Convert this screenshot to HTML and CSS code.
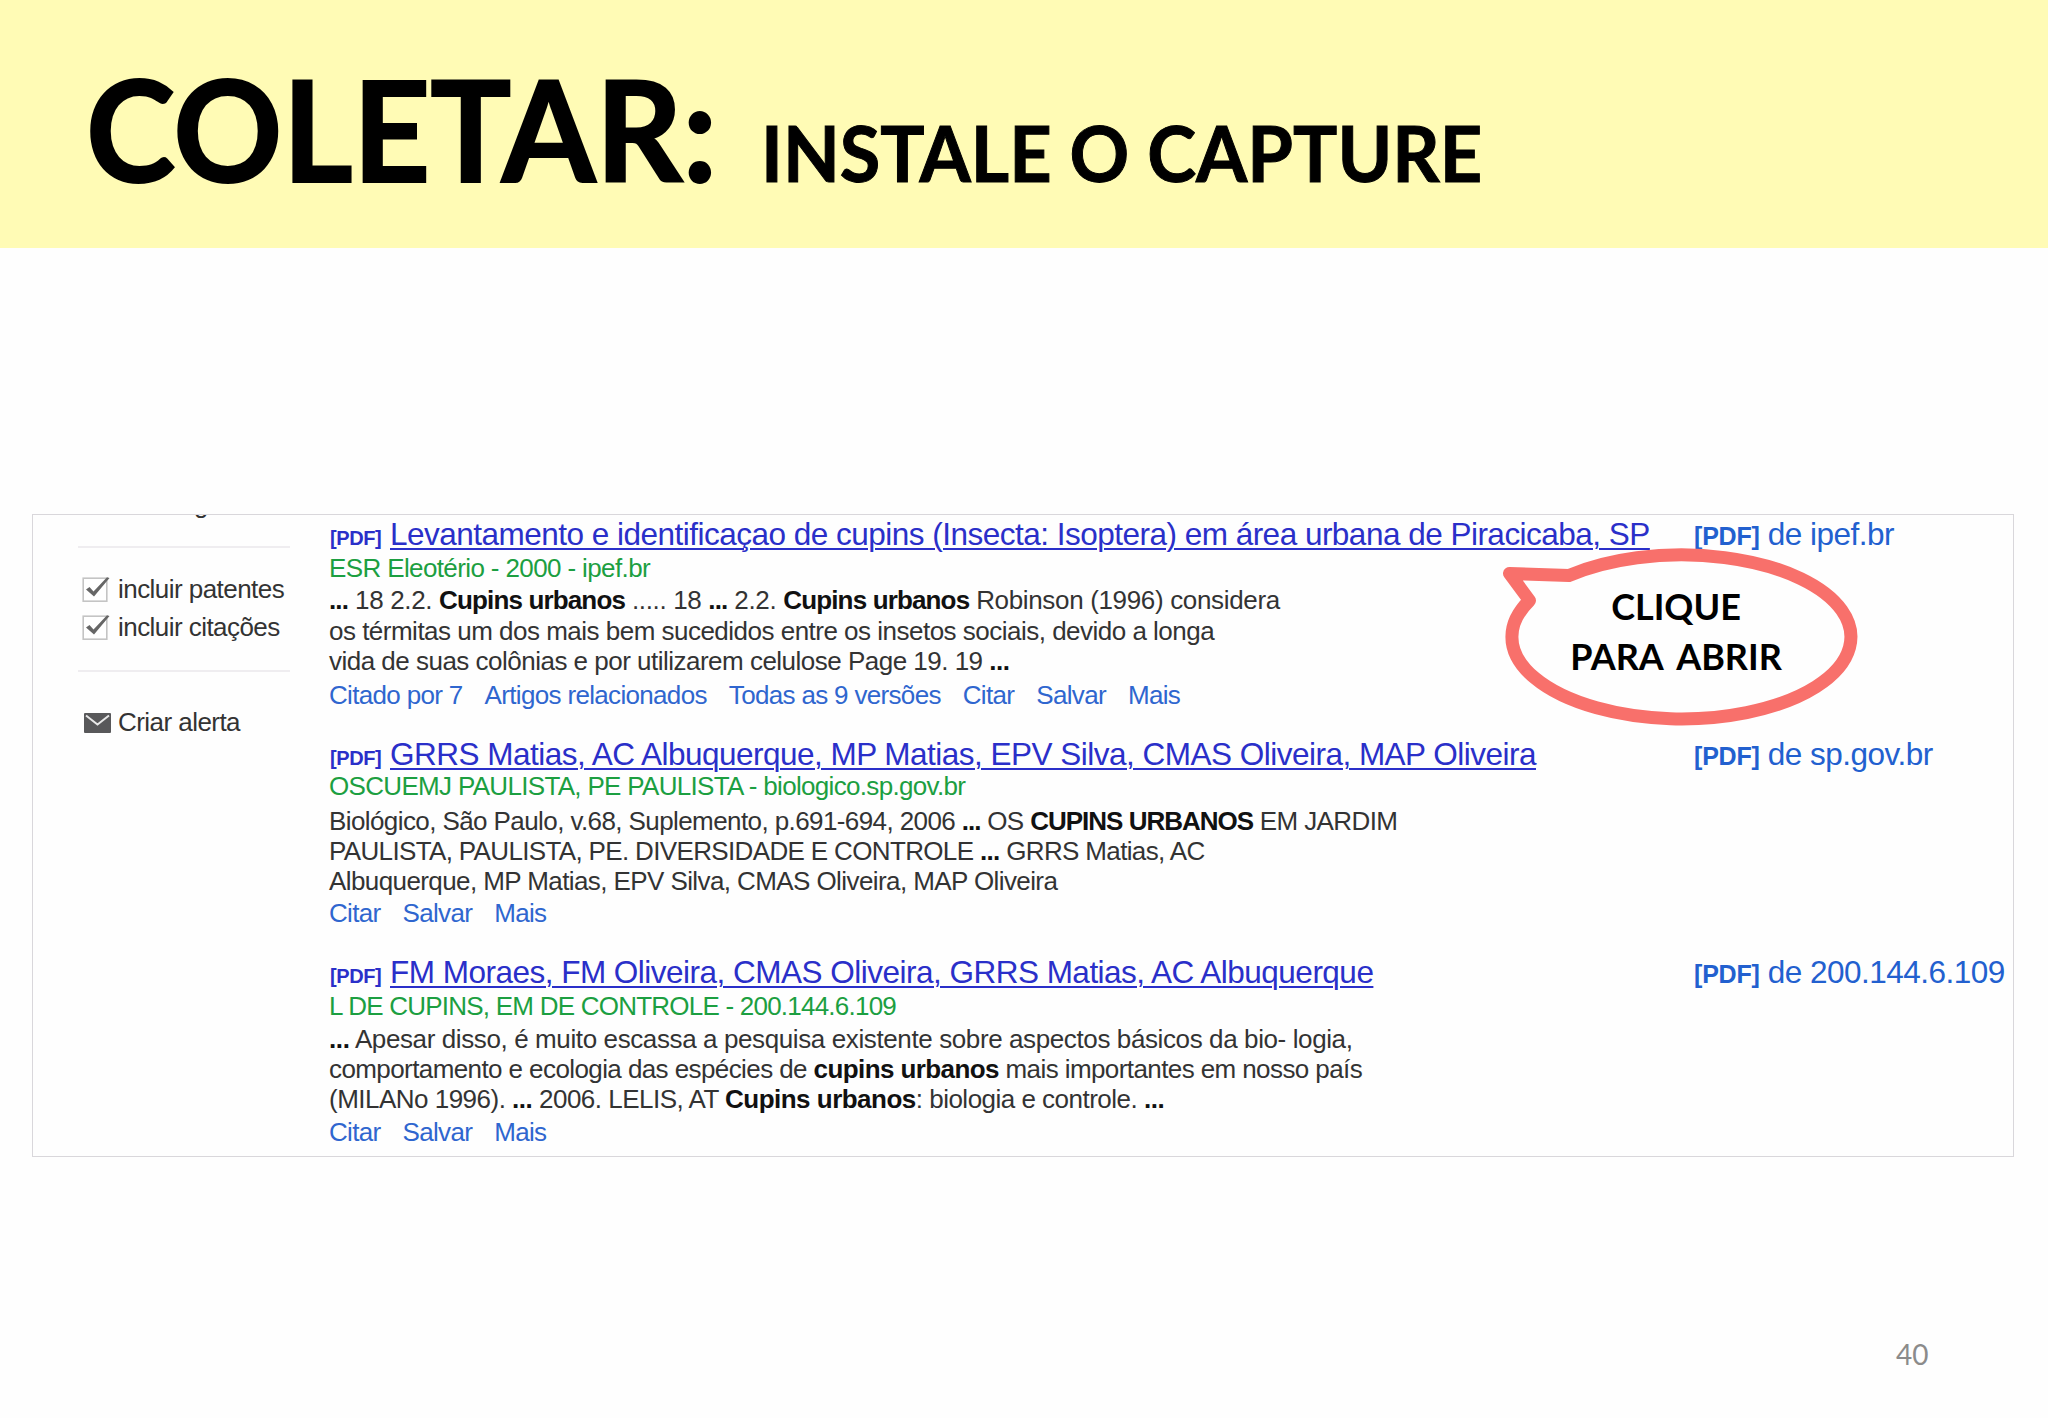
FILE: index.html
```
<!DOCTYPE html>
<html lang="pt-BR">
<head>
  <meta charset="UTF-8">
  <title>Coletar: instale o Capture</title>
  <link rel="stylesheet" href="styles.css">
</head>
<body>

<header class="slide-header">
  <h1><span class="main">COLETAR:</span><span class="sub">INSTALE O CAPTURE</span></h1>
</header>

<main class="scholar">
  <aside class="sidebar">
    <div class="cut"><span>g</span></div>
    <div class="filters">
      <label class="option">
        <svg class="check" width="30" height="28" viewBox="0 0 30 28">
          <rect x="1.2" y="3.2" width="23.6" height="23" fill="#fff" stroke="#c4c4c4" stroke-width="1.6"/>
          <path d="M4 14.5L7.5 12L11.5 16.5L25 2.2L27.5 3L12 21.5Z" fill="#666"/>
        </svg>
        <span>incluir patentes</span>
      </label>
      <label class="option">
        <svg class="check" width="30" height="28" viewBox="0 0 30 28">
          <rect x="1.2" y="3.2" width="23.6" height="23" fill="#fff" stroke="#c4c4c4" stroke-width="1.6"/>
          <path d="M4 14.5L7.5 12L11.5 16.5L25 2.2L27.5 3L12 21.5Z" fill="#666"/>
        </svg>
        <span>incluir citações</span>
      </label>
    </div>
    <div class="alert">
      <svg class="mail" width="27" height="20" viewBox="0 0 27 20">
        <rect width="27" height="20" rx="1" fill="#58585a"/>
        <path d="M2 2.5L13.5 11.5L25 2.5" fill="none" stroke="#e8e8e8" stroke-width="2"/>
      </svg>
      <span>Criar alerta</span>
    </div>
  </aside>

  <section class="results">
    <article class="result">
      <div class="title-row">
        <h2><span class="tag">[PDF]</span><a class="title">Levantamento e identificaçao de cupins (Insecta: Isoptera) em área urbana de Piracicaba, SP</a></h2>
        <a class="source"><b>[PDF]</b><span>de ipef.br</span></a>
      </div>
      <p class="author">ESR Eleotério - 2000 - ipef.br</p>
      <p class="snippet">
        <span class="mixed"><b>...</b> 18 2.2. <b>Cupins urbanos</b> ..... 18 <b>...</b> 2.2. <b>Cupins urbanos</b> Robinson (1996) considera</span><br>
        <span>os térmitas um dos mais bem sucedidos entre os insetos sociais, devido a longa</span><br>
        <span>vida de suas colônias e por utilizarem celulose Page 19. 19 <b>...</b></span>
      </p>
      <nav class="actions"><a>Citado por 7</a><a>Artigos relacionados</a><a>Todas as 9 versões</a><a>Citar</a><a>Salvar</a><a>Mais</a></nav>
    </article>

    <article class="result second">
      <div class="title-row">
        <h2><span class="tag">[PDF]</span><a class="title">GRRS Matias, AC Albuquerque, MP Matias, EPV Silva, CMAS Oliveira, MAP Oliveira</a></h2>
        <a class="source"><b>[PDF]</b><span>de sp.gov.br</span></a>
      </div>
      <p class="author">OSCUEMJ PAULISTA, PE PAULISTA - biologico.sp.gov.br</p>
      <p class="snippet">
        <span class="tight upper">Biológico, São Paulo, v.68, Suplemento, p.691-694, 2006 <b>...</b> OS <b>CUPINS URBANOS</b> EM JARDIM</span><br>
        <span class="tighter">PAULISTA, PAULISTA, PE. DIVERSIDADE E CONTROLE <b>...</b> GRRS Matias, AC</span><br>
        <span class="tight">Albuquerque, MP Matias, EPV Silva, CMAS Oliveira, MAP Oliveira</span>
      </p>
      <nav class="actions"><a>Citar</a><a>Salvar</a><a>Mais</a></nav>
    </article>

    <article class="result third">
      <div class="title-row">
        <h2><span class="tag">[PDF]</span><a class="title">FM Moraes, FM Oliveira, CMAS Oliveira, GRRS Matias, AC Albuquerque</a></h2>
        <a class="source"><b>[PDF]</b><span>de 200.144.6.109</span></a>
      </div>
      <p class="author">L DE CUPINS, EM DE CONTROLE - 200.144.6.109</p>
      <p class="snippet">
        <span class="loose"><b>...</b> Apesar disso, é muito escassa a pesquisa existente sobre aspectos básicos da bio- logia,</span><br>
        <span class="tight">comportamento e ecologia das espécies de <b>cupins urbanos</b> mais importantes em nosso país</span><br>
        <span>(MILANo 1996). <b>...</b> 2006. LELIS, AT <b>Cupins urbanos</b>: biologia e controle. <b>...</b></span>
      </p>
      <nav class="actions"><a>Citar</a><a>Salvar</a><a>Mais</a></nav>
    </article>
  </section>

  <div class="callout">
    <svg class="bubble" width="366" height="190" viewBox="1496 542 366 190">
      <path d="M1569 575.5A169.5 82 0 1 1 1529.5 600.5L1509.5 573.5Z" fill="#fefefe" stroke="#f8706b" stroke-width="13" stroke-linejoin="round"/>
    </svg>
    <p>CLIQUE<br>PARA ABRIR</p>
  </div>
</main>

<footer class="page-number">40</footer>

</body>
</html>
```
FILE: styles.css
```
* {
  box-sizing: border-box;
  margin: 0;
  padding: 0;
}

body {
  width: 2048px;
  height: 1418px;
  overflow: hidden;
  background-color: #fefefe;
  font-family: "Liberation Sans", Arial, sans-serif;
  color: #333;
}

.slide-header {
  height: 248px;
  padding: 45px 0 0 86px;
  background-color: #fffbb5;
}

h1 {
  display: flex;
  align-items: baseline;
  font-family: Lato, "Open Sans", sans-serif;
  line-height: 168px;
  color: #000;
  white-space: nowrap;
}

h1 span {
  transform: scaleX(0.972);
  transform-origin: left;
}

h1 .main {
  font-size: 139px;
  -webkit-text-stroke: 2px #000;
}

h1 .sub {
  margin-left: 25px;
  font-size: 76px;
  -webkit-text-stroke: 1px #000;
}

/* captured results frame */
.scholar {
  position: relative;
  display: flex;
  width: 1982px;
  height: 643px;
  margin: 266px 0 0 32px;
  overflow: hidden;
  border: 1px solid #d9d7db;
}

.sidebar {
  flex: none;
  width: 212px;
  margin-left: 45px;
  font-size: 26px;
  letter-spacing: -0.55px;
}

.cut {
  height: 33px;
  padding-left: 116px;
  line-height: 30px;
  border-bottom: 2px solid #efedf0;
  overflow: hidden;
}

.cut span {
  display: block;
  margin-top: -26px;
}

.filters {
  height: 124px;
  padding-top: 22px;
  border-bottom: 2px solid #efedf0;
}

.option,
.alert {
  display: flex;
  align-items: center;
  height: 38px;
  white-space: nowrap;
}

.check {
  flex: none;
  margin: 0 6px 0 4px;
}

.alert {
  margin-top: 31px;
}

.mail {
  flex: none;
  margin: 1px 7px 0 6px;
}

.results {
  flex: none;
  width: 1700px;
  margin: 3px 0 0 38px;
}

.result {
  margin-bottom: 28px;
  white-space: nowrap;
}

.title-row {
  display: grid;
  grid-template-columns: 1366px 1fr;
  height: 32px;
  line-height: 32px;
}

h2 {
  display: flex;
  align-items: baseline;
  font-weight: normal;
}

.tag {
  flex: none;
  width: 60px;
  margin-left: 2px;
  font-size: 20px;
  font-weight: bold;
  letter-spacing: -0.4px;
  color: #2a2fc9;
}

.title {
  font-size: 31.5px;
  letter-spacing: -0.51px;
  color: #2a2fc9;
  text-decoration: underline;
  text-decoration-thickness: 2px;
  text-underline-offset: 3px;
}

.source {
  display: flex;
  align-items: baseline;
  gap: 8px;
  font-size: 31.5px;
  letter-spacing: -0.5px;
  color: #2260cf;
}

.source b {
  font-size: 25px;
  letter-spacing: -0.2px;
}

.author {
  margin-top: 3px;
  padding-left: 1px;
  font-size: 26px;
  line-height: 30px;
  letter-spacing: -0.62px;
  color: #1c9f41;
}

.snippet {
  margin-top: 2.4px;
  padding-left: 1px;
  font-size: 26px;
  line-height: 30.33px;
  letter-spacing: -0.51px;
}

.snippet b {
  color: #111;
}

.snippet .loose {
  letter-spacing: -0.39px;
}

.snippet .tight {
  letter-spacing: -0.59px;
}

.snippet .tighter {
  letter-spacing: -0.65px;
}

.snippet .mixed {
  letter-spacing: -0.34px;
}

.snippet .mixed b {
  letter-spacing: -0.85px;
}

.snippet .upper b {
  letter-spacing: -1px;
}

.actions {
  display: flex;
  gap: 22px;
  margin-top: 4px;
  padding-left: 1px;
  font-size: 26px;
  line-height: 30px;
  letter-spacing: -0.67px;
  color: #2f66cf;
}

.second .author {
  margin-top: 1px;
  letter-spacing: -0.68px;
}

.second .snippet {
  margin-top: 4.4px;
}

.second .actions {
  margin-top: 1.6px;
}

.third .author {
  letter-spacing: -0.77px;
}

.third .actions {
  margin-top: 2.5px;
}

/* speech bubble over the results */
.callout {
  position: absolute;
  left: 1463px;
  top: 27px;
}

.bubble {
  display: block;
}

.callout p {
  position: absolute;
  left: 0;
  top: 39px;
  width: 360px;
  font: bold 36px/50px Lato, "Open Sans", sans-serif;
  word-spacing: 6px;
  text-align: center;
  color: #000;
}

.page-number {
  margin: 177px 0 0 1896px;
  font: 28px/40px Lato, "Open Sans", sans-serif;
  color: #8b8b8b;
}
```
